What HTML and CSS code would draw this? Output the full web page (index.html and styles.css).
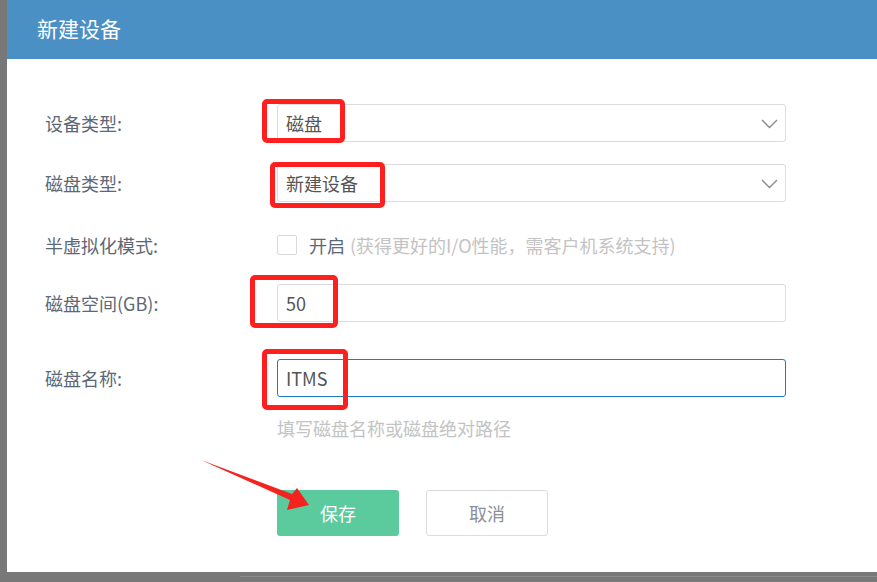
FILE: index.html
```html
<!DOCTYPE html>
<html lang="zh-CN">
<head>
    <meta charset="UTF-8">
    <title>新建设备</title>
    <link rel="stylesheet" href="styles.css">
</head>
<body>
    <div class="dialog">
        <div class="dialog-header">
            <h2>新建设备</h2>
        </div>

        <form class="dialog-body">
            <div class="form-row">
                <label class="form-label">设备类型:</label>
                <div class="form-control select">
                    <span>磁盘</span>
                    <svg class="chevron" width="17" height="10" viewBox="0 0 17 10"><polyline points="1,1 8.5,8.5 16,1" fill="none" stroke="#8a8a8a" stroke-width="1.4"/></svg>
                </div>
            </div>

            <div class="form-row">
                <label class="form-label">磁盘类型:</label>
                <div class="form-control select">
                    <span>新建设备</span>
                    <svg class="chevron" width="17" height="10" viewBox="0 0 17 10"><polyline points="1,1 8.5,8.5 16,1" fill="none" stroke="#8a8a8a" stroke-width="1.4"/></svg>
                </div>
            </div>

            <div class="form-row form-row-check">
                <label class="form-label">半虚拟化模式:</label>
                <div class="check-group">
                    <span class="checkbox"></span>
                    <span class="check-text">开启</span>
                    <span class="hint">(获得更好的I/O性能，需客户机系统支持)</span>
                </div>
            </div>

            <div class="form-row form-row-wide">
                <label class="form-label">磁盘空间(GB):</label>
                <div class="form-control"><span>50</span></div>
            </div>

            <div class="form-row form-row-tight">
                <label class="form-label">磁盘名称:</label>
                <div class="form-control focused"><span>ITMS</span></div>
            </div>
            <p class="help">填写磁盘名称或磁盘绝对路径</p>

            <div class="actions">
                <button type="button" class="btn btn-save">保存</button>
                <button type="button" class="btn btn-cancel">取消</button>
            </div>
        </form>

        <!-- annotation marks -->
        <div class="mark mark-1"></div>
        <div class="mark mark-2"></div>
        <div class="mark mark-3"></div>
        <div class="mark mark-4"></div>
        <svg class="arrow" width="877" height="582" viewBox="0 0 877 582">
            <polygon points="201,460 292,494 297,488 309,505 287,510 290,500" fill="#f5231f"/>
        </svg>
    </div>
    <div class="under-line"></div>
</body>
</html>
```

FILE: styles.css
```css
* {
    margin: 0;
    padding: 0;
    box-sizing: border-box;
    font-family: "Noto Sans CJK SC", "Noto Sans", sans-serif;
}

body {
    background-color: #787878;
    width: 877px;
    height: 582px;
    overflow: hidden;
}

.dialog {
    position: relative;
    margin-left: 7px;
    width: 870px;
    height: 572px;
    background-color: #fff;
}

.under-line {
    margin: 4px 0 0 240px;
    height: 1px;
    background-color: #8c8c8c;
}

.dialog-header {
    height: 59px;
    background-color: #4b90c5;
    padding-left: 30px;
    display: flex;
    align-items: center;
}

.dialog-header h2 {
    color: #fff;
    font-size: 21px;
    font-weight: normal;
    line-height: 1;
    margin-top: -2px;
}

.dialog-body {
    padding: 45px 0 0 38px;
}

.form-row {
    display: flex;
    align-items: center;
    height: 38px;
    margin-bottom: 22px;
}

.form-row-check {
    height: 42px;
    margin-bottom: 18px;
}

.form-row-wide {
    margin-bottom: 37px;
}

.form-row-tight {
    margin-bottom: 0;
}

.form-label {
    width: 232px;
    flex-shrink: 0;
    font-size: 18px;
    color: #5c6876;
}

.form-control {
    width: 509px;
    height: 38px;
    border: 1px solid #dcdcdc;
    border-radius: 3px;
    display: flex;
    align-items: center;
    justify-content: space-between;
    padding: 0 7px 0 8px;
    font-size: 18px;
    color: #555;
}

.form-control.focused {
    border-color: #1d7fc3;
}

.chevron {
    margin-top: 1px;
}

.check-group {
    display: flex;
    align-items: center;
    font-size: 18px;
}

.checkbox {
    width: 20px;
    height: 20px;
    border: 1px solid #d9d9d9;
    border-radius: 2px;
    margin-right: 12px;
}

.check-text {
    color: #5c6876;
    margin-right: 5px;
}

.hint {
    color: #c3c3c3;
}

.help {
    margin: 18px 0 0 232px;
    font-size: 18px;
    color: #c3c3c3;
    line-height: 26px;
}

.actions {
    display: flex;
    gap: 27px;
    margin: 49px 0 0 232px;
}

.btn {
    width: 122px;
    height: 46px;
    border-radius: 3px;
    font-size: 18px;
    cursor: pointer;
}

.btn-save {
    background-color: #5bcb9e;
    border: none;
    color: #fff;
}

.btn-cancel {
    background-color: #fff;
    border: 1px solid #dcdcdc;
    color: #8a9099;
}

.mark {
    position: absolute;
    border: 5px solid #ff1f1f;
    border-radius: 5px;
}

.mark-1 {
    left: 255px;
    top: 99px;
    width: 83px;
    height: 44px;
}

.mark-2 {
    left: 263px;
    top: 162px;
    width: 115px;
    height: 46px;
}

.mark-3 {
    left: 243px;
    top: 275px;
    width: 88px;
    height: 53px;
}

.mark-4 {
    left: 255px;
    top: 349px;
    width: 86px;
    height: 61px;
}

.arrow {
    position: absolute;
    left: -7px;
    top: 0;
    pointer-events: none;
}
```
